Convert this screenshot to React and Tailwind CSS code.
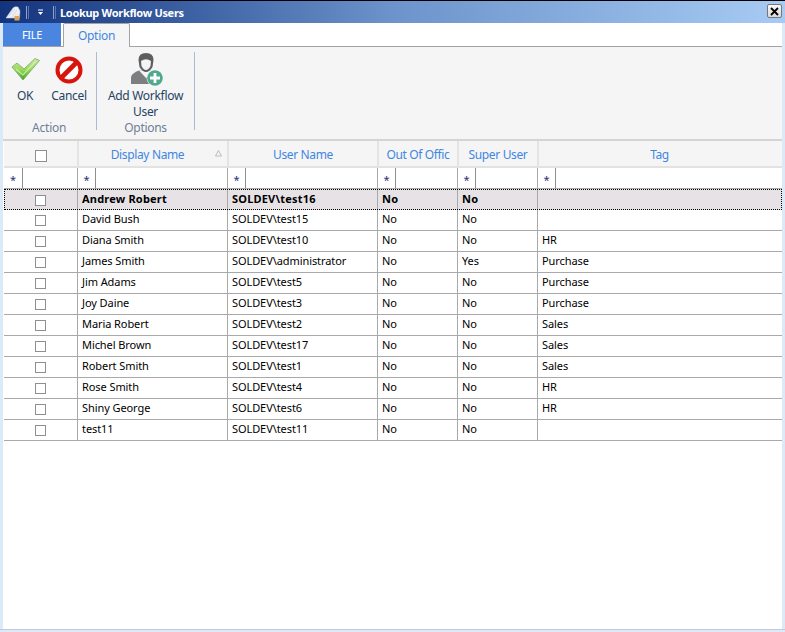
const rows = [
  ["Andrew Robert", "SOLDEV\\test16", "No", "No", ""],
  ["David Bush", "SOLDEV\\test15", "No", "No", ""],
  ["Diana Smith", "SOLDEV\\test10", "No", "No", "HR"],
  ["James Smith", "SOLDEV\\administrator", "No", "Yes", "Purchase"],
  ["Jim Adams", "SOLDEV\\test5", "No", "No", "Purchase"],
  ["Joy Daine", "SOLDEV\\test3", "No", "No", "Purchase"],
  ["Maria Robert", "SOLDEV\\test2", "No", "No", "Sales"],
  ["Michel Brown", "SOLDEV\\test17", "No", "No", "Sales"],
  ["Robert Smith", "SOLDEV\\test1", "No", "No", "Sales"],
  ["Rose Smith", "SOLDEV\\test4", "No", "No", "HR"],
  ["Shiny George", "SOLDEV\\test6", "No", "No", "HR"],
  ["test11", "SOLDEV\\test11", "No", "No", ""],
];

const cols = "grid grid-cols-[73px_150px_150px_80px_80px_243px]";

function Check() {
  return (
    <svg width="30" height="24" viewBox="0 0 30 24">
      <defs>
        <linearGradient id="g" x1="0" y1="0" x2="0" y2="1">
          <stop offset="0" stopColor="#c9eaa0" />
          <stop offset="0.5" stopColor="#9adb5c" />
          <stop offset="1" stopColor="#3fa51f" />
        </linearGradient>
      </defs>
      <path d="M1 10 L6 6 L13 12 L24 1.5 L28.5 3.5 L12 23 Z" fill="url(#g)" stroke="#7aa56a" strokeWidth="0.8" strokeLinejoin="round" />
      <path d="M5 12 L12 18 L25 4" fill="none" stroke="#dff5c4" strokeWidth="1.2" opacity="0.7" />
    </svg>
  );
}

function NoSign() {
  return (
    <svg width="28" height="28" viewBox="0 0 28 28">
      <circle cx="14" cy="14" r="11.5" fill="#fff" stroke="#d8150c" strokeWidth="4" />
      <path d="M6 22 L22 6" stroke="#d8150c" strokeWidth="4.6" />
    </svg>
  );
}

function AddUser() {
  return (
    <svg width="40" height="38" viewBox="0 0 40 38">
      <path d="M5 34 L5 27 Q6 23 13 20.5 L27 20.5 Q33 23 34 28 L34 34 Z" fill="#7d7e80" />
      <path d="M13 20.5 L20 28 L27 20.5 Z" fill="#f5f5f5" />
      <path d="M12.5 10 Q12.5 3 20 3 Q27.5 3 27.5 10 L26.5 17 Q23.5 22 20 22 Q16.5 22 13.5 17 Z" fill="#5c5e60" />
      <path d="M15 11 Q20 7.5 25 11 L24.5 16 Q22.5 20 20 20 Q17.5 20 15.5 16 Z" fill="#f4f4f4" />
      <circle cx="29" cy="28" r="8.5" fill="#fff" opacity="0.8" />
      <circle cx="29" cy="28" r="7.8" fill="#4fa98c" />
      <path d="M29 23 V33 M24 28 H34" stroke="#fff" strokeWidth="2.8" />
    </svg>
  );
}

function TitleIcon() {
  return (
    <svg width="17" height="17" viewBox="0 0 17 17">
      <path d="M2 14 L9 4 Q11 2 14 3 L16 7 L15.5 14 Z" fill="#eef0f6" stroke="#c2c8dc" strokeWidth="0.5" />
      <path d="M5 12 L11 5 M8 13 L13 6" stroke="#c5cbdd" strokeWidth="0.7" />
      <rect x="10.5" y="12" width="5" height="4.5" fill="#d9a75c" />
      <path d="M11.5 12 V10.5 H14.5 V12" fill="none" stroke="#f1e6c6" />
    </svg>
  );
}

function Box({ className = "" }) {
  return <span className={`block w-[11px] h-[11px] border border-[#8f8f8f] bg-white ${className}`} />;
}

function Filter({ first }) {
  return (
    <div className={`h-full flex ${first ? "" : "border-l border-[#a9a9a9]"}`}>
      <div className={`${first ? "w-[19px]" : "w-[18px]"} border-r border-[#8f8f8f] flex items-center justify-center text-[#2c2c78] text-[11px] pt-[2px]`}>*</div>
    </div>
  );
}

export default function App() {
  return (
    <div className="w-[785px] h-[632px] overflow-hidden bg-white flex flex-col text-[11px] text-black [font-family:'DejaVu_Sans',sans-serif] leading-none tracking-[-0.08px]">
      <div className="h-[23px] shrink-0 border-t border-black bg-gradient-to-r from-[#14337d] via-[#6c93cb] to-[#a7cbf3] flex items-center pl-[4px] pr-[3px]">
        <TitleIcon />
        <span className="ml-[5px] w-[1px] h-[13px] bg-[#8fa3c8]" />
        <span className="ml-[1px] w-[1px] h-[13px] bg-[#5a76ad]" />
        <svg className="ml-[8px]" width="7" height="7" viewBox="0 0 7 7">
          <path d="M1 1 H6" stroke="#fff" strokeWidth="1" />
          <path d="M1 3 H6 L3.5 6 Z" fill="#fff" />
        </svg>
        <span className="ml-[9px] w-[1px] h-[13px] bg-[#8fa3c8]" />
        <span className="ml-[1px] w-[1px] h-[13px] bg-[#5a76ad]" />
        <span className="ml-[4px] text-white font-bold tracking-[-0.3px]">Lookup Workflow Users</span>
        <div className="ml-auto w-[15px] h-[14px] mt-[-2px] rounded-[2px] border border-[#777] bg-gradient-to-b from-[#f8f8f8] to-[#d9d9d9] flex items-center justify-center">
          <svg width="9" height="9" viewBox="0 0 9 9">
            <path d="M1 1 L8 8 M8 1 L1 8" stroke="#000" strokeWidth="1.8" />
          </svg>
        </div>
      </div>

      <div className="flex-1 flex min-h-0">
        <div className="w-[3px] shrink-0 bg-[#dce9f6]" />
        <div className="w-[779px] shrink-0 flex flex-col">
          <div className="h-[23px] shrink-0 flex bg-white">
            <div className="w-[58px] h-[23px] bg-[#4a86e0] text-white flex items-center justify-center tracking-[-0.3px]">FILE</div>
            <div className="relative ml-[2px] w-[67px] h-[24px] z-10 bg-[#f5f5f5] border border-b-0 border-[#a3a3a3] rounded-t-[2px] text-[#3f86e2] text-[12px] flex items-center justify-center tracking-[-0.3px]">Option</div>
          </div>
          <div className="h-[93px] shrink-0 bg-[#f5f5f5] border-t border-[#a3a3a3] flex pt-[6px] text-[#274463] text-[12px] tracking-[-0.3px]">
            <div className="w-[93px] flex flex-col items-center relative">
              <div className="flex w-full">
                <div className="w-[44px] flex flex-col items-center">
                  <div className="h-[30px] pl-[2px] pt-[2px] flex items-center"><Check /></div>
                  <div className="mt-[7px]">OK</div>
                </div>
                <div className="w-[44px] flex flex-col items-center">
                  <div className="h-[30px] pt-[3px] flex items-center"><NoSign /></div>
                  <div className="mt-[7px]">Cancel</div>
                </div>
              </div>
              <div className="absolute top-[69px] left-[29px] text-[#6f7f95] tracking-[-0.2px]">Action</div>
            </div>
            <div className="w-[1px] h-[78px] -mt-[1px] bg-[#a9bcd6]" />
            <div className="w-[97px] flex flex-col items-center">
              <div className="h-[31px] flex items-center"><AddUser /></div>
              <div className="mt-[4px] text-center leading-[16px]">Add Workflow<br />User</div>
              <div className="text-[#6f7f95] mt-[2px]">Options</div>
            </div>
            <div className="w-[1px] h-[78px] -mt-[1px] bg-[#a9bcd6]" />
          </div>
          <div className="h-[2px] shrink-0 bg-[#d4d4d4]" />
          <div className="pl-[1px]">
            <div className={`${cols} h-[27px] bg-[#f5f5f5] border-b-2 border-[#e2e2e2] text-[#3f86e2] text-[12px] tracking-[-0.36px]`}>
              <div className="flex items-center justify-center pt-[5px]"><Box className="w-[12px] h-[12px]" /></div>
              {["Display Name", "User Name", "Out Of Offic", "Super User", "Tag"].map((h, i) => (
                <div key={h} className={`relative border-l-2 border-[#e4e4e4] flex items-center justify-center pt-[2px] ${i === 0 ? "pr-[11px]" : ""}`}>
                  <span className="whitespace-nowrap">{h}</span>
                  {i === 0 && (
                    <svg className="absolute right-[5px] top-[9px]" width="7" height="7" viewBox="0 0 7 7">
                      <path d="M3.5 .5 L6.5 6 H.5 Z" fill="none" stroke="#a8a8a8" strokeWidth="0.7" />
                    </svg>
                  )}
                </div>
              ))}
            </div>
            <div className={`${cols} h-[21px] border-b border-[#a9a9a9]`}>
              {[0, 1, 2, 3, 4, 5].map((i) => <Filter key={i} first={i === 0} />)}
            </div>
            {rows.map((r, idx) => {
              const sel = idx === 0;
              return (
                <div key={r[0]} className={`${cols} h-[21px] ${sel ? "bg-[#e6e2e6] font-bold tracking-[0.2px] outline outline-1 outline-dotted outline-black -outline-offset-1" : "border-b border-[#a9a9a9]"}`}>
                  <div className="flex items-center justify-center pt-[1px]"><Box /></div>
                  {r.map((c, j) => (
                    <div key={j} className={`border-l border-[#a9a9a9] flex items-center pl-[4px] ${sel ? "pb-[2px]" : "pb-[3px]"} whitespace-nowrap overflow-hidden`}>{c}</div>
                  ))}
                </div>
              );
            })}
          </div>
        </div>
        <div className="flex-1 bg-[#dce9f6]" />
      </div>
      <div className="h-[3px] shrink-0 bg-[#dce9f6] border-t border-[#c3c6dd]" />
    </div>
  );
}
